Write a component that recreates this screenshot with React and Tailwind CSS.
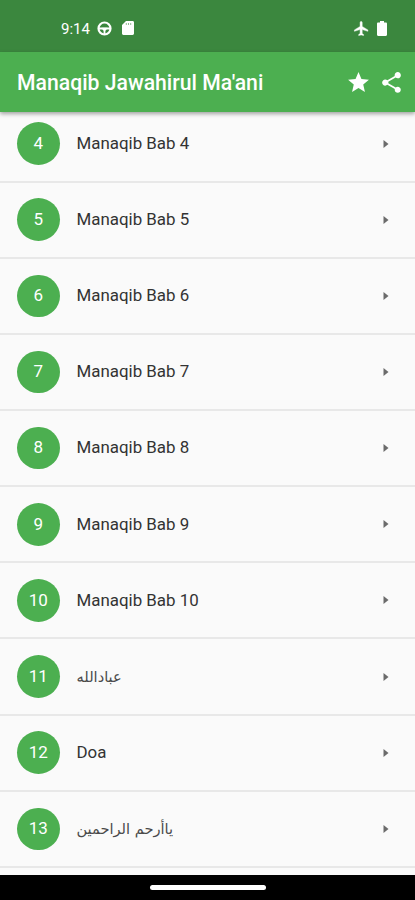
import { MdShare, MdStar } from "react-icons/md";

const chapters = [
  { number: 4, title: "Manaqib Bab 4" },
  { number: 5, title: "Manaqib Bab 5" },
  { number: 6, title: "Manaqib Bab 6" },
  { number: 7, title: "Manaqib Bab 7" },
  { number: 8, title: "Manaqib Bab 8" },
  { number: 9, title: "Manaqib Bab 9" },
  { number: 10, title: "Manaqib Bab 10" },
  { number: 11, title: "عبادالله", arabic: true },
  { number: 12, title: "Doa" },
  { number: 13, title: "ياأرحم الراحمين", arabic: true },
];

function StatusBar() {
  return (
    <div className="flex h-[52px] shrink-0 items-center justify-between bg-[#3b873e] pt-1 pr-[28px] pl-[61px] text-white">
      <div className="flex items-center">
        <span className="w-[29px] pt-[2px] text-[15px] leading-none whitespace-nowrap">9:14</span>
        <svg className="ml-[7px] h-[15px] w-[15px]" viewBox="0 0 15 15" fill="none" stroke="currentColor">
          <circle cx="7.5" cy="7.5" r="6" strokeWidth="2.2" />
          <path d="M1.5 7.5h12M7.5 8v5.5" strokeWidth="1.8" />
          <path d="M4.5 6.8h6l-1.6 2.6H6.1z" fill="currentColor" stroke="none" />
        </svg>
        <svg className="ml-[10px] h-[14px] w-3" viewBox="0 0 12 14" fill="currentColor">
          <path d="M4 0h6.6C11.4 0 12 .6 12 1.4v11.2c0 .8-.6 1.4-1.4 1.4H1.4C.6 14 0 13.4 0 12.6V4z" />
          <path d="M4.3 2.2v1.6M6.5 2.2v1.6M8.7 2.2v1.6" stroke="#3b873e" strokeWidth="0.7" />
        </svg>
      </div>
      <div className="flex items-center">
        <svg className="h-[17px] w-[17px]" viewBox="0 0 24 24" fill="currentColor" stroke="currentColor" strokeWidth="0.6">
          <path d="M21 16v-2l-8-5V3.5c0-.83-.67-1.5-1.5-1.5S10 2.67 10 3.5V9l-8 5v2l8-2.5V19l-2 1.5V22l3.500-1 3.5 1v-1.5L13 19v-5.500l8 2.500z" />
        </svg>
        <svg className="ml-[7px] h-[15px] w-[10px]" viewBox="0 0 10 15" fill="currentColor">
          <path d="M3 0h4v1.5h1.8c.7 0 1.2.5 1.2 1.2v11.1c0 .7-.5 1.2-1.2 1.2H1.2C.5 15 0 14.5 0 13.8V2.7c0-.7.5-1.2 1.2-1.2H3z" />
        </svg>
      </div>
    </div>
  );
}

function AppBar() {
  return (
    <header className="relative z-10 flex h-[59.5px] shrink-0 items-center bg-[#4caf50] pt-[2px] pr-[11px] pl-[17px] text-white shadow-[0_2px_4px_rgba(0,0,0,0.35)]">
      <h1 className="flex-1 text-[21.2px] leading-none font-medium whitespace-nowrap">Manaqib Jawahirul Ma'ani</h1>
      <button aria-label="Favorit">
        <MdStar className="h-[25px] w-[25px]" />
      </button>
      <button className="ml-2" aria-label="Bagikan">
        <MdShare className="h-[25px] w-[25px]" />
      </button>
    </header>
  );
}

function ChapterRow({ number, title, arabic }) {
  return (
    <li className="flex h-[76.15px] shrink-0 items-center border-b-2 border-[#e8e8e8] pr-[26px] pl-[17px]">
      <span className="flex h-[42.5px] w-[42.5px] items-center justify-center rounded-full bg-[#4caf50] text-[17px] text-white">
        {number}
      </span>
      {arabic ? (
        <span
          dir="rtl"
          lang="ar"
          className="ml-[17px] font-['DejaVu_Sans',sans-serif] text-[14.6px] whitespace-nowrap text-[#4a4a4a]"
        >
          {title}
        </span>
      ) : (
        <span className="ml-[17px] text-[16.9px] whitespace-nowrap text-[#333]">{title}</span>
      )}
      <svg className="ml-auto h-2 w-[6px]" viewBox="0 0 6 8" fill="#6b6b6b">
        <path d="M0.5 0L5.5 4L0.5 8z" />
      </svg>
    </li>
  );
}

export default function App() {
  return (
    <div className="flex h-[900px] w-[415px] flex-col overflow-hidden bg-[#fafafa] font-[Roboto,'Noto_Sans',sans-serif]">
      <StatusBar />
      <AppBar />
      <main className="min-h-0 flex-1 overflow-hidden">
        <ul className="-mt-[5px] flex flex-col">
          {chapters.map((chapter) => (
            <ChapterRow key={chapter.number} {...chapter} />
          ))}
        </ul>
      </main>
      <div className="flex h-[25px] shrink-0 items-center justify-center bg-black">
        <div className="h-[5px] w-[116px] rounded-full bg-white" />
      </div>
    </div>
  );
}
